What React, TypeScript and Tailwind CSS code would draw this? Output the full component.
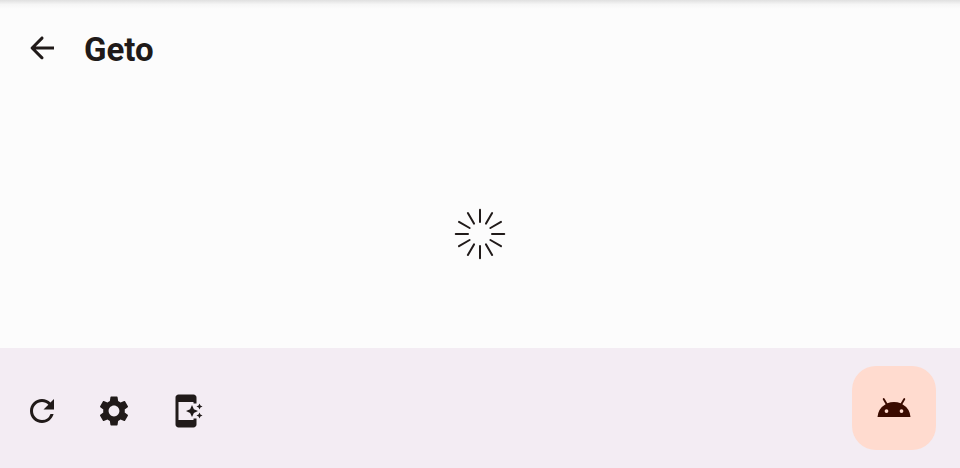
import { MdAndroid, MdAppShortcut, MdRefresh, MdSettings } from "react-icons/md";

const spokes = Array.from({ length: 12 }, (_, i) => i * 30);

export default function App() {
  return (
    <div className="flex h-[468px] w-[960px] flex-col overflow-hidden bg-[#fcfcfc] font-['Roboto',sans-serif] text-[#201a19]">
      <div className="h-[9px] shrink-0 bg-linear-to-b from-[#e0e0e0] via-[#f6f6f6] to-[#fcfcfc]" />
      <header className="flex h-[78px] shrink-0 items-center px-6">
        <button aria-label="Back">
          <svg viewBox="0 0 24 24" className="size-9" fill="currentColor">
            <path d="M20 11H7.83l4.88-4.88c.39-.39.39-1.03 0-1.42-.39-.39-1.02-.39-1.41 0l-6.59 6.59c-.39.39-.39 1.02 0 1.41l6.59 6.59c.39.39 1.02.39 1.41 0 .39-.39.39-1.02 0-1.41L7.83 13H20z" />
          </svg>
        </button>
        <h1 className="ml-6 pt-1 text-[33px] leading-[42px] font-bold">Geto</h1>
      </header>
      <main className="flex flex-1 items-center justify-center pt-[33px]">
        <svg viewBox="-30 -30 60 60" className="size-[60px]" stroke="currentColor" strokeWidth="2" strokeLinecap="round">
          {spokes.map((angle) => (
            <line key={angle} x1="0" y1="-12" x2="0" y2="-24.25" transform={`rotate(${angle})`} />
          ))}
        </svg>
      </main>
      <footer className="flex h-[120px] shrink-0 items-center justify-between bg-[#f3ecf3] px-6">
        <div className="flex gap-9 pt-1.5">
          <button aria-label="Refresh"><MdRefresh className="size-9" /></button>
          <button aria-label="Settings"><MdSettings className="size-9" /></button>
          <button aria-label="Shortcut"><MdAppShortcut className="size-9" /></button>
        </div>
        <button aria-label="Launch app" className="flex size-[84px] items-center justify-center rounded-3xl bg-[#ffdbcf] text-[#3a0b00]">
          <MdAndroid className="size-9" />
        </button>
      </footer>
    </div>
  );
}
